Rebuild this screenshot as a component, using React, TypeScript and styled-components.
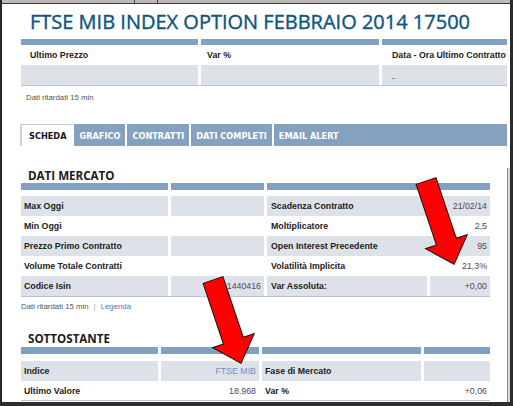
import React from 'react';
import styled, { createGlobalStyle } from 'styled-components';

const GlobalStyle = createGlobalStyle`
  html, body {
    margin: 0;
    padding: 0;
    background: #fff;
  }
  body {
    font-family: "Liberation Sans", Arial, sans-serif;
  }
`;

const Frame = styled.div`
  position: relative;
  width: 513px;
  height: 406px;
  box-sizing: border-box;
  border-left: 2px solid #262626;
  border-right: 3px solid #2b2b2b;
  border-bottom: 4px solid #2e2e2e;
  background: #fff;
  overflow: hidden;
  display: flex;
  flex-direction: column;
`;

const TopStrip = styled.div`
  display: flex;
  flex: none;
  height: 3px;
  background: #b9b9b9;
  border-bottom: 1px solid #3a3a3a;
`;

const StripPart = styled.div<{ $w?: number }>`
  ${p => (p.$w ? `width: ${p.$w}px;` : 'flex: 1;')}
  border-right: 1px solid #4a4a4a;
  &:last-child { border-right: none; }
`;

const Body = styled.div`
  flex: 1;
  min-height: 0;
  display: flex;
`;

const Content = styled.div`
  flex: 1;
  min-width: 0;
  padding-left: 19px;
  display: flex;
  flex-direction: column;
  overflow: hidden;
`;

const Gutter = styled.div`
  width: 3px;
  flex: none;
  padding-top: 164px;
  display: flex;
  flex-direction: column;
`;

const GutterTrack = styled.div`
  flex: 1;
  border-left: 1px solid #7e8ca0;
  background: #cfd8e3;
`;

const Title = styled.h1`
  margin: 6px 0 0 9px;
  font-family: "Open Sans", sans-serif;
  font-weight: 400;
  font-size: 20px;
  line-height: 24px;
  color: #11557b;
  -webkit-text-stroke: 0.4px #11557b;
  white-space: nowrap;
`;

const Table = styled.div<{ $w?: number; $top?: number }>`
  width: ${p => (p.$w ? `${p.$w}px` : 'auto')};
  margin-top: ${p => p.$top ?? 0}px;
  display: flex;
  flex-direction: column;
  flex: none;
`;

const Row = styled.div<{ $cols: string; $gap?: number }>`
  display: grid;
  grid-template-columns: ${p => p.$cols};
  column-gap: 3px;
  margin-bottom: ${p => p.$gap ?? 0}px;
`;

const Bar = styled.div<{ $span?: number; $h?: number }>`
  grid-column: span ${p => p.$span ?? 1};
  height: ${p => p.$h ?? 7}px;
  background: #82a0bf;
`;

const Cell = styled.div<{ $shade?: boolean; $span?: number; $pad?: number; $h?: number }>`
  grid-column: span ${p => p.$span ?? 1};
  height: ${p => p.$h ?? 20}px;
  box-sizing: border-box;
  padding: 0 3px 0 ${p => p.$pad ?? 3}px;
  display: flex;
  align-items: center;
  justify-content: space-between;
  background: ${p => (p.$shade ? '#dde2e8' : 'transparent')};
  font-size: 8.8px;
  white-space: nowrap;
`;

const Label = styled.span`
  font-weight: 700;
  color: #222;
`;

const Value = styled.span<{ $link?: boolean }>`
  margin-left: auto;
  color: ${p => (p.$link ? '#6f91c3' : '#4d4863')};
`;

const Dash = styled.span`
  color: #555;
  margin-top: 6px;
`;

const TableEnd = styled.div`
  height: 1px;
  background: #b7c5d5;
`;

const Note = styled.div<{ $top: number; $pad?: number }>`
  margin-top: ${p => p.$top}px;
  padding-left: ${p => p.$pad ?? 0}px;
  font-size: 7.8px;
  line-height: 12px;
  color: #555;
  white-space: nowrap;
`;

const Sep = styled.span`
  color: #9a9a9a;
  margin: 0 5px;
`;

const Link = styled.span`
  color: #4f76ad;
`;

const TabBar = styled.div`
  margin: 20px 0 0 -1px;
  height: 22px;
  display: flex;
  gap: 2px;
  flex: none;
`;

const Tab = styled.div<{ $active?: boolean; $fill?: boolean }>`
  ${p => (p.$fill ? 'flex: 1;' : '')}
  box-sizing: border-box;
  display: flex;
  align-items: center;
  padding: 0 ${p => (p.$active ? 7 : 5)}px;
  font-family: "DejaVu Sans", Verdana, sans-serif;
  font-weight: 700;
  font-size: 8.2px;
  white-space: nowrap;
  color: ${p => (p.$active ? '#151515' : '#fff')};
  background: ${p => (p.$active ? '#fff' : '#84a2c0')};
  border-top: 1px solid ${p => (p.$active ? '#b8cadc' : '#84a2c0')};
  border-left: ${p => (p.$active ? '2px solid #c6d4e2' : 'none')};
  margin-right: ${p => (p.$active ? '-1px' : '0')};
`;

const Heading = styled.h2<{ $top: number }>`
  margin: ${p => p.$top}px 0 0 7px;
  font-family: "Open Sans", sans-serif;
  font-weight: 700;
  font-size: 11.6px;
  line-height: 14px;
  color: #1b1b1b;
  flex: none;
`;

// red callout arrows drawn over the tables
const Overlay = styled.svg`
  position: absolute;
  left: -2px;
  top: 0;
  pointer-events: none;
`;

const ARROW = '-10.5,0 10.5,0 10.5,64 22,64 0,88 -22,64 -10.5,64';

const Arrow: React.FC<{ x: number; y: number }> = ({ x, y }) => (
  <g transform={`translate(${x} ${y}) rotate(-18.6)`}>
    <polygon points={ARROW} fill="#ff0000" stroke="#111" strokeWidth={1} />
  </g>
);

const TOP_COLS = '177px 178px 177px';
const MKT_COLS = '147px 93px 160px 60px';
const SUB_COLS = '137px 98px 159px 66px';

type MarketRow = { left: string; leftVal?: string; right: string; rightVal?: string; split?: boolean };

const market: MarketRow[] = [
  { left: 'Max Oggi', right: 'Scadenza Contratto', rightVal: '21/02/14' },
  { left: 'Min Oggi', right: 'Moltiplicatore', rightVal: '2,5' },
  { left: 'Prezzo Primo Contratto', right: 'Open Interest Precedente', rightVal: '95' },
  { left: 'Volume Totale Contratti', right: 'Volatilità Implicita', rightVal: '21,3%' },
  { left: 'Codice Isin', leftVal: 'IT0001440416', right: 'Var Assoluta:', rightVal: '+0,00', split: true },
];

const tabs = ['SCHEDA', 'GRAFICO', 'CONTRATTI', 'DATI COMPLETI', 'EMAIL ALERT'];

export default function App() {
  return (
    <>
      <GlobalStyle />
      <Frame>
        <TopStrip>
          <StripPart $w={132} />
          <StripPart $w={22} />
          <StripPart />
        </TopStrip>
        <Body>
          <Content>
            <Title>FTSE MIB INDEX OPTION FEBBRAIO 2014 17500</Title>

            <Table $w={540} $top={5}>
              <Row $cols={TOP_COLS}>
                <Bar $h={6} />
                <Bar $h={6} />
                <Bar $h={6} />
              </Row>
              <Row $cols={TOP_COLS}>
                <Cell $pad={9}><Label>Ultimo Prezzo</Label></Cell>
                <Cell $pad={6}><Label>Var %</Label></Cell>
                <Cell $pad={10}><Label>Data - Ora Ultimo Contratto</Label></Cell>
              </Row>
              <Row $cols={TOP_COLS}>
                <Cell $shade />
                <Cell $shade />
                <Cell $shade $pad={10}><Dash>-</Dash></Cell>
              </Row>
              <TableEnd />
            </Table>
            <Note $top={6} $pad={5}>Dati ritardati 15 min</Note>

            <TabBar>
              {tabs.map((t, i) => (
                <Tab key={t} $active={i === 0} $fill={i === tabs.length - 1}>{t}</Tab>
              ))}
            </TabBar>

            <Heading $top={23}>DATI MERCATO</Heading>
            <Table $w={469}>
              <Row $cols={MKT_COLS} $gap={6}>
                <Bar />
                <Bar />
                <Bar $span={2} />
              </Row>
              {market.map((r, i) => {
                const shade = i % 2 === 0;
                return (
                  <Row key={r.left} $cols={MKT_COLS}>
                    <Cell $shade={shade}><Label>{r.left}</Label></Cell>
                    <Cell $shade={shade}>{r.leftVal && <Value>{r.leftVal}</Value>}</Cell>
                    {r.split ? (
                      <>
                        <Cell $shade={shade} $pad={4}><Label>{r.right}</Label></Cell>
                        <Cell $shade={shade}><Value>{r.rightVal}</Value></Cell>
                      </>
                    ) : (
                      <Cell $shade={shade} $span={2} $pad={4}>
                        <Label>{r.right}</Label>
                        <Value>{r.rightVal}</Value>
                      </Cell>
                    )}
                  </Row>
                );
              })}
              <TableEnd />
            </Table>
            <Note $top={4}>
              Dati ritardati 15 min<Sep>|</Sep><Link>Legenda</Link>
            </Note>

            <Heading $top={19}>SOTTOSTANTE</Heading>
            <Table $w={469} $top={1}>
              <Row $cols={SUB_COLS} $gap={7}>
                <Bar />
                <Bar />
                <Bar />
                <Bar />
              </Row>
              <Row $cols={SUB_COLS}>
                <Cell $shade><Label>Indice</Label></Cell>
                <Cell $shade><Value $link>FTSE MIB</Value></Cell>
                <Cell $shade><Label>Fase di Mercato</Label></Cell>
                <Cell $shade />
              </Row>
              <Row $cols={SUB_COLS}>
                <Cell $h={19}><Label>Ultimo Valore</Label></Cell>
                <Cell $h={19}><Value>18.968</Value></Cell>
                <Cell $h={19} $span={2}>
                  <Label>Var %</Label>
                  <Value>+0,06</Value>
                </Cell>
              </Row>
              <TableEnd />
            </Table>
          </Content>
          <Gutter>
            <GutterTrack />
          </Gutter>
        </Body>
        <Overlay width={513} height={406} viewBox="0 0 513 406">
          <Arrow x={426} y={181} />
          <Arrow x={213} y={280} />
        </Overlay>
      </Frame>
    </>
  );
}
